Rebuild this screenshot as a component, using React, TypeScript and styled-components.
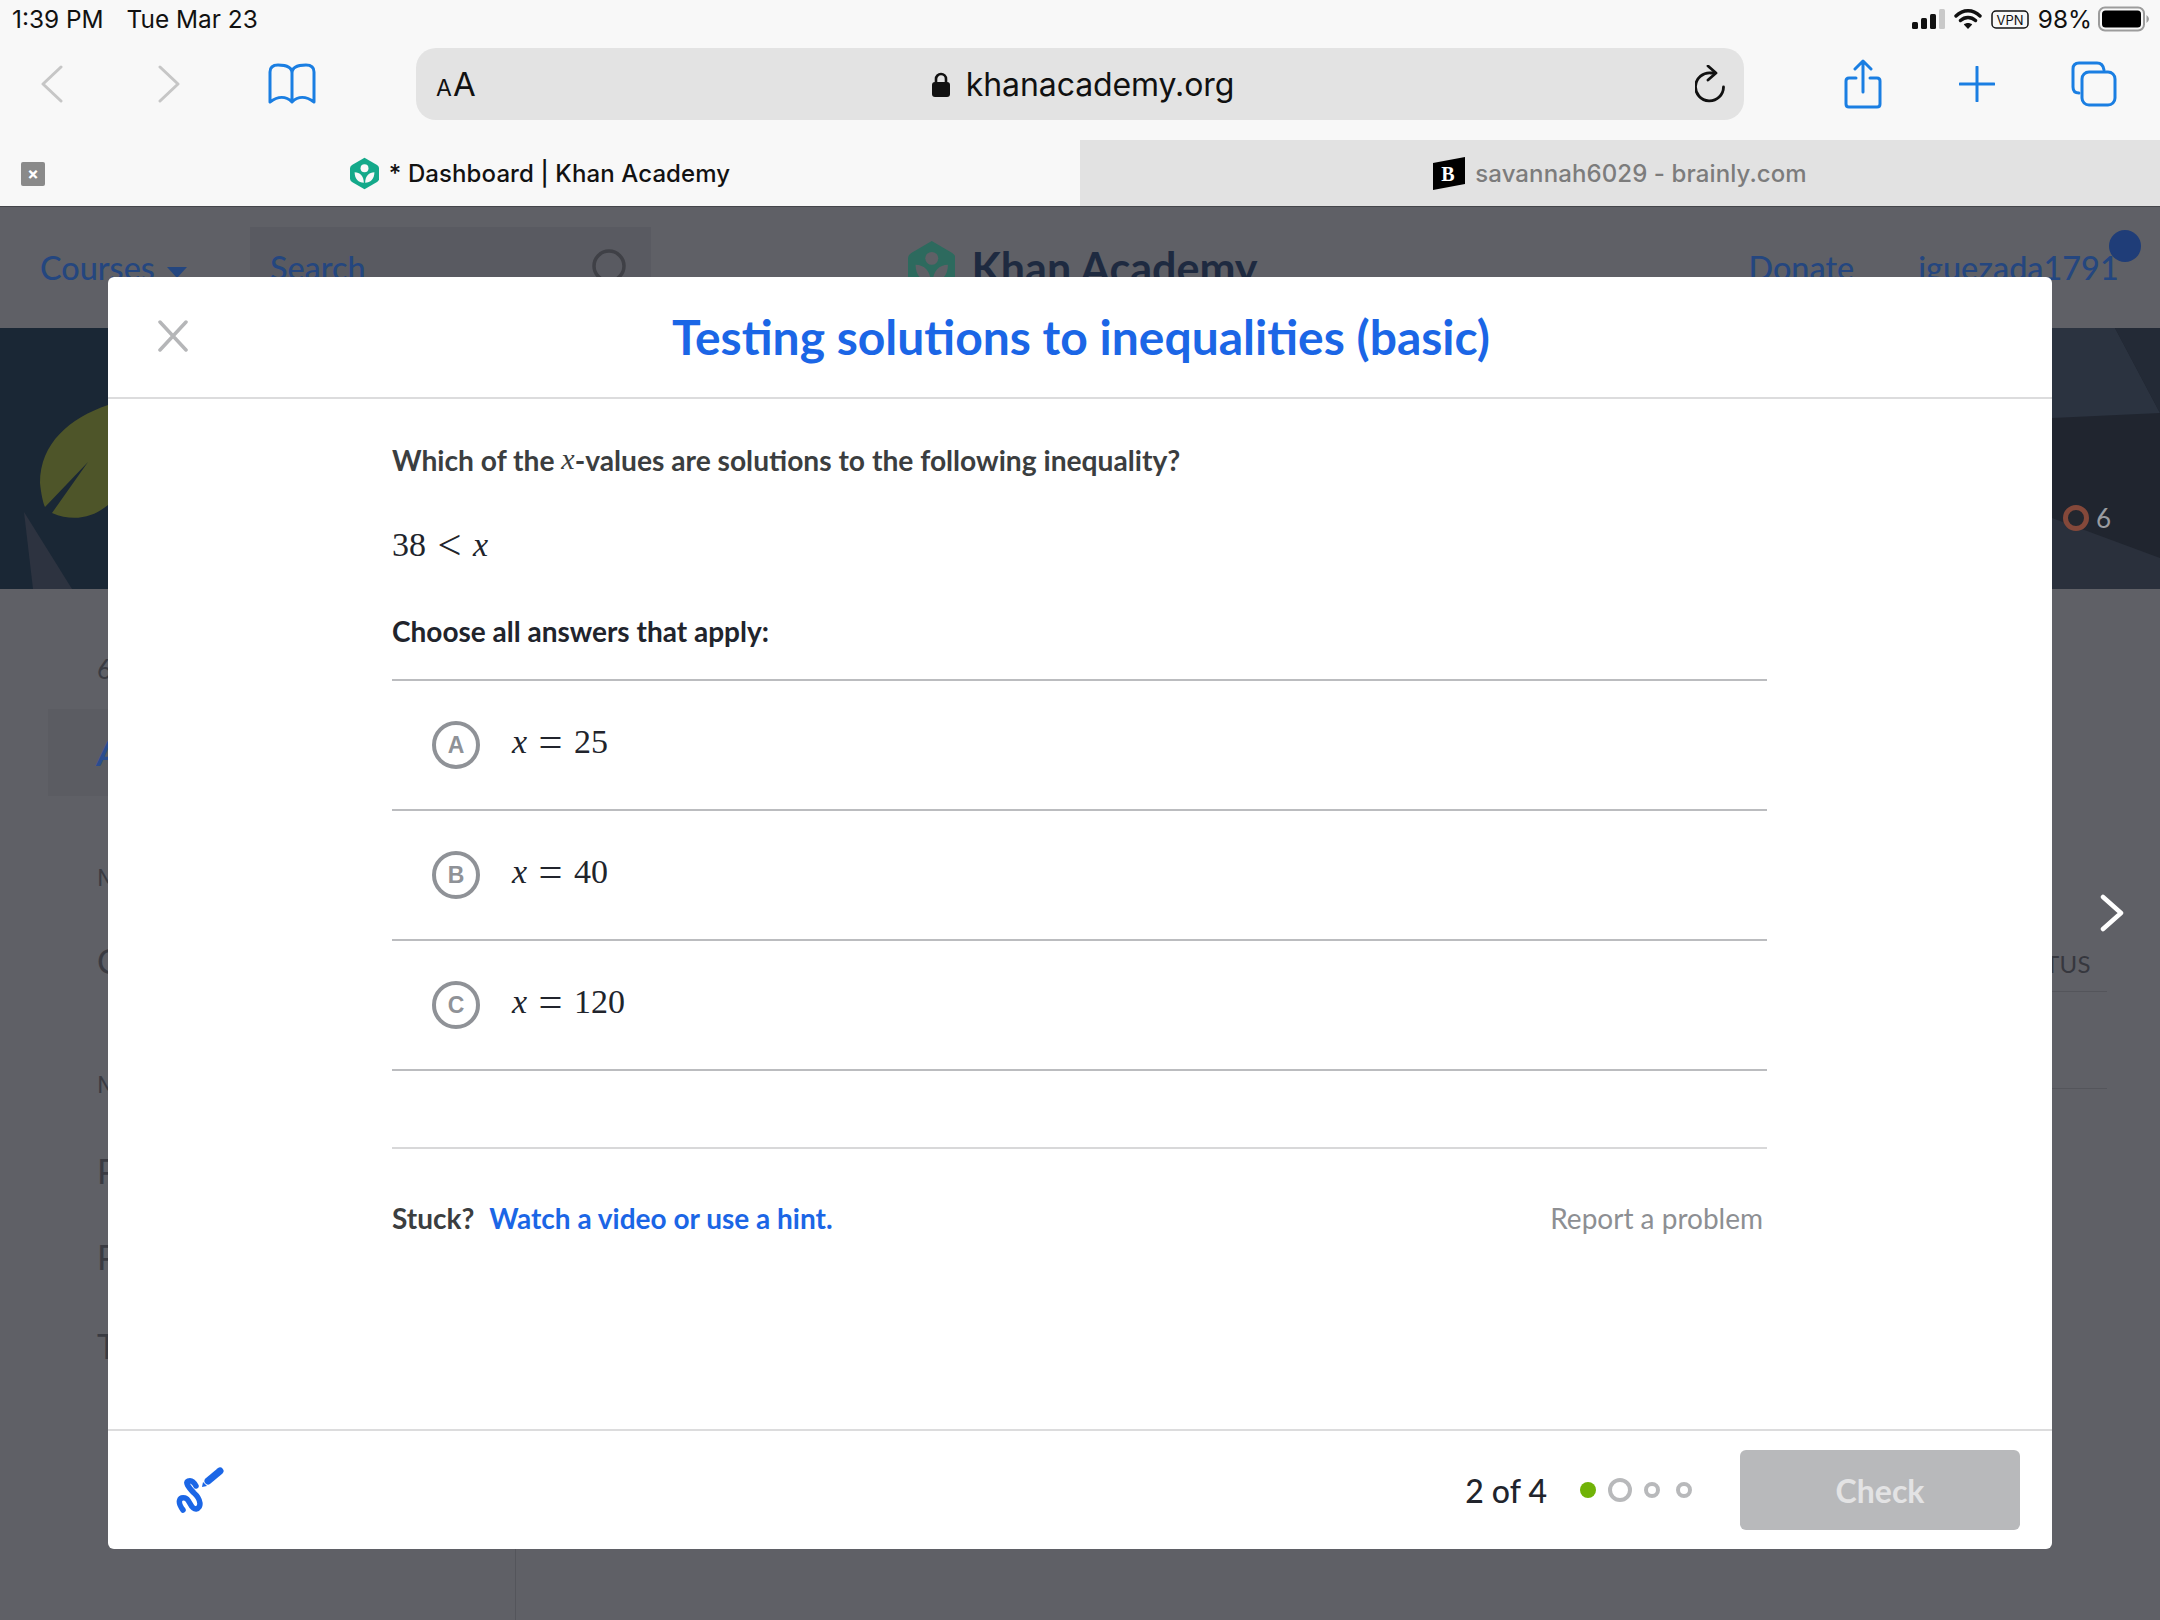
import styled, { createGlobalStyle } from "styled-components";

const GlobalStyle = createGlobalStyle`
  html, body {
    margin: 0;
    padding: 0;
    overflow: hidden;
    background: #5f6066;
  }
  * { box-sizing: border-box; }
`;

const Screen = styled.div`
  position: relative;
  display: flex;
  flex-direction: column;
  width: 2160px;
  height: 1620px;
  overflow: hidden;
  background: #5f6066;
  font-family: Lato, "Liberation Sans", sans-serif;
`;

/* browser chrome */
const Chrome = styled.div`
  flex: none;
  background: #f8f8f8;
  font-family: Inter, "Liberation Sans", sans-serif;
`;

const StatusBar = styled.div`
  display: flex;
  align-items: center;
  justify-content: space-between;
  height: 40px;
  padding: 0 10px 2px 12px;
  font-size: 24.4px;
  color: #111;
`;

const StatusGroup = styled.div<{ $gap: number }>`
  display: flex;
  align-items: center;
  gap: ${p => p.$gap}px;
`;

const BatteryLevel = styled.span`
  margin-right: -3px;
`;

const Toolbar = styled.div`
  display: flex;
  align-items: center;
  height: 100px;
  padding-bottom: 12px;
`;

const NavIcon = styled.svg<{ $left: number }>`
  flex: none;
  margin-left: ${p => p.$left}px;
  display: block;
`;

const UrlBar = styled.div`
  flex: none;
  display: flex;
  align-items: center;
  width: 1328px;
  height: 72px;
  margin-left: 100px;
  padding: 0 17px 0 20px;
  border-radius: 20px;
  background: #e3e3e3;
  color: #111;
`;

const TextSize = styled.div`
  width: 41px;
  font-size: 33px;
  line-height: 1;
  white-space: nowrap;

  & small {
    font-size: 23px;
    margin-right: 1px;
  }
`;

const Address = styled.div`
  flex: 1;
  display: flex;
  align-items: center;
  justify-content: center;
  gap: 16px;
  padding-right: 6px;
  font-size: 32px;
  letter-spacing: -0.1px;
`;

const TabBar = styled.div`
  display: grid;
  grid-template-columns: 1fr 1fr;
  height: 67px;
  border-bottom: 1px solid #44454a;
`;

const Tab = styled.div<{ $active?: boolean }>`
  position: relative;
  display: flex;
  align-items: center;
  justify-content: center;
  gap: 10px;
  background: ${p => (p.$active ? "#f8f8f8" : "#e2e2e2")};
  color: ${p => (p.$active ? "#121212" : "#7c7c7c")};
  font-size: 24px;
  font-weight: 500;
  letter-spacing: 0.1px;
`;

const TabClose = styled.div`
  position: absolute;
  left: 21px;
  top: 22px;
  width: 24px;
  height: 24px;
  display: flex;
  align-items: center;
  justify-content: center;
  border-radius: 2px;
  background: #8a8a8a;
  color: #fff;
  font-size: 17px;
  font-weight: 700;
`;

/* dimmed page behind the dialog */
const PageNav = styled.div`
  flex: none;
  position: relative;
  display: flex;
  align-items: center;
  height: 120px;
  padding: 0 0 0 40px;
  font-size: 32.4px;
  font-weight: 500;
  color: #24467f;
`;

const CaretDown = styled.span`
  width: 0;
  height: 0;
  margin: 10px 0 0 12px;
  border-left: 10px solid transparent;
  border-right: 10px solid transparent;
  border-top: 11px solid #24467f;
`;

const SearchBox = styled.div`
  display: flex;
  align-items: center;
  justify-content: space-between;
  align-self: flex-start;
  width: 401px;
  height: 120px;
  margin: 20px 0 0 63px;
  padding: 0 22px 40px 20px;
  background: #595a61;
  color: #24467f;
`;

const NavLogo = styled.div`
  display: flex;
  align-items: center;
  gap: 16px;
  margin-left: 257px;
  font-size: 43px;
  font-weight: 700;
  color: #1e2a40;
`;

const NavLink = styled.span<{ $left: number }>`
  position: relative;
  margin-left: ${p => p.$left}px;
  white-space: nowrap;
`;

const NavDot = styled.span`
  position: absolute;
  top: -18px;
  right: -22px;
  width: 32px;
  height: 32px;
  border-radius: 50%;
  background: #1f3d78;
`;

const Hero = styled.div`
  flex: none;
  position: relative;
  display: flex;
  align-items: center;
  justify-content: flex-end;
  gap: 7px;
  height: 261px;
  margin-top: 1px;
  padding: 118px 49px 0 0;
  color: #9a9ca1;
  font-size: 26px;
  background: #222935;
`;

const HeroArt = styled.svg`
  position: absolute;
  left: 0;
  top: 0;
`;

const HeroBadge = styled.span`
  position: relative;
  width: 26px;
  height: 26px;
  border-radius: 50%;
  border: 5px solid #84483a;
  background: #23272f;
`;

const HeroCount = styled.span`
  position: relative;
`;

const PageBody = styled.div`
  flex: 1;
  display: grid;
  grid-template-columns: 516px 1fr;
`;

const Sidebar = styled.div`
  position: relative;
  padding: 62px 0 0 48px;
  border-right: 1px solid #54555b;
  color: #3a3b42;
`;

const SideItem = styled.div<{ $top: number; $size: number }>`
  margin-top: ${p => p.$top}px;
  padding-left: 49px;
  font-size: ${p => p.$size}px;
  line-height: 36px;
  white-space: nowrap;
`;

const SideActive = styled.div`
  display: flex;
  align-items: center;
  width: 400px;
  height: 87px;
  margin-top: 22px;
  padding-left: 49px;
  font-size: 34px;
  font-style: italic;
  font-weight: 700;
  color: #2a4d8f;
  background: #5b5c62;
`;

const PageMain = styled.div`
  display: flex;
  flex-direction: column;
  align-items: flex-end;
  padding: 358px 53px 0 0;
  color: #36373e;
`;

const StatusHead = styled.div`
  width: 500px;
  height: 45px;
  padding-right: 16px;
  text-align: right;
  font-size: 24px;
  line-height: 34px;
  letter-spacing: 0.4px;
  border-bottom: 1px solid #54555b;
`;

const StatusRow = styled.div`
  width: 500px;
  height: 97px;
  border-bottom: 1px solid #54555b;
`;

const NextArrow = styled.svg`
  position: absolute;
  left: 2100px;
  top: 894px;
`;

/* exercise dialog */
const Dialog = styled.div`
  position: absolute;
  left: 108px;
  top: 277px;
  display: flex;
  flex-direction: column;
  width: 1944px;
  height: 1272px;
  border-radius: 6px;
  background: #fff;
`;

const DialogHead = styled.div`
  flex: none;
  position: relative;
  display: flex;
  align-items: center;
  justify-content: center;
  height: 122px;
  border-bottom: 2px solid #dcdcdd;
`;

const CloseIcon = styled.svg`
  position: absolute;
  left: 50px;
  top: 43px;
`;

const DialogTitle = styled.h1`
  margin: 0 0 2px 2px;
  font-size: 48px;
  font-weight: 700;
  color: #1b66e6;
`;

const DialogBody = styled.div`
  flex: 1;
  display: flex;
  flex-direction: column;
  padding: 0 285px 0 284px;
`;

const Question = styled.p`
  display: flex;
  align-items: center;
  height: 36px;
  margin: 43px 0 0;
  font-size: 28.2px;
  font-weight: 700;
  color: #3b3e40;
  white-space: pre;
`;

const MathText = styled.span<{ $size?: number }>`
  margin-bottom: 6px;
  font-family: "Liberation Serif", "DejaVu Serif", serif;
  font-size: ${p => p.$size ?? 34}px;
  font-weight: 400;
  color: #21242c;
  white-space: pre;
`;

const QuestionVar = styled(MathText)`
  margin-bottom: 2px;
  color: #3b3e40;
`;

const MathOp = styled.span`
  margin: 0 0.27em;
  font-size: 1.25em;
  line-height: 1;
  vertical-align: -3px;
`;

const Equation = styled.div`
  height: 40px;
  margin-top: 46px;
  line-height: 40px;
`;

const Prompt = styled.div`
  height: 36px;
  margin-top: 49px;
  font-size: 28px;
  line-height: 36px;
  font-weight: 700;
  color: #21242c;
`;

const Choices = styled.div`
  margin-top: 30px;
  border-top: 2px solid #bbbcbf;
`;

const Choice = styled.div`
  display: flex;
  align-items: center;
  gap: 32px;
  height: 130px;
  padding-left: 40px;
  border-bottom: 2px solid #bbbcbf;
`;

const ChoiceLetter = styled.div`
  flex: none;
  display: flex;
  align-items: center;
  justify-content: center;
  width: 48px;
  height: 48px;
  border: 4px solid #8f9297;
  border-radius: 50%;
  font-family: "Liberation Sans", sans-serif;
  font-size: 23px;
  font-weight: 700;
  color: #8f9297;
`;

const Spacer = styled.div`
  height: 78px;
  border-bottom: 2px solid #d8d8d9;
`;

const HintRow = styled.div`
  display: flex;
  align-items: center;
  justify-content: space-between;
  height: 36px;
  margin-top: 51px;
  padding-right: 4px;
  font-size: 28px;
`;

const Stuck = styled.span`
  font-weight: 700;
  color: #3b3e40;
  white-space: pre;
`;

const HintLink = styled.a`
  margin-left: 15px;
  color: #1b66e6;
  font-weight: 700;
`;

const Report = styled.a`
  color: #8d8f93;
`;

const DialogFoot = styled.div`
  flex: none;
  display: flex;
  align-items: center;
  height: 120px;
  padding: 0 32px 0 68px;
  border-top: 2px solid #dcdcdd;
`;

const Progress = styled.div`
  margin-left: auto;
  font-size: 32px;
  font-weight: 500;
  color: #21242c;
`;

const Dots = styled.div`
  display: grid;
  grid-template-columns: repeat(4, 32px);
  justify-items: center;
  align-items: center;
  margin: 0 40px 0 25px;
`;

const Dot = styled.span<{ $kind: "done" | "current" | "todo" }>`
  width: ${p => (p.$kind === "current" ? 24 : 16)}px;
  height: ${p => (p.$kind === "current" ? 24 : 16)}px;
  border-radius: 50%;
  background: ${p => (p.$kind === "done" ? "#71b307" : "#fff")};
  border: ${p => (p.$kind === "done" ? "none" : "4px solid #b8b9bb")};
`;

const CheckButton = styled.button`
  width: 280px;
  height: 80px;
  border: none;
  border-radius: 6px;
  background: #b8b9bb;
  color: #e3e3e4;
  font-family: Lato, "Liberation Sans", sans-serif;
  font-size: 32px;
  font-weight: 700;
`;

function KhanLogo({ size, bg, fg }: { size: number; bg: string; fg: string }) {
  return (
    <svg width={size * 0.88} height={size} viewBox="0 0 44 50">
      <path d="M22 1 L41 12 Q44 14 44 17 L44 33 Q44 36 41 38 L22 49 L3 38 Q0 36 0 33 L0 17 Q0 14 3 12 Z" fill={bg} />
      <circle cx="22" cy="17" r="6" fill={fg} />
      <path d="M7 23 C15 23 21 29 21 39 C13 39 7 33 7 23 Z M37 23 C29 23 23 29 23 39 C31 39 37 33 37 23 Z" fill={fg} />
    </svg>
  );
}

const choices = [
  { letter: "A", value: "25" },
  { letter: "B", value: "40" },
  { letter: "C", value: "120" }
];

export default function App() {
  return (
    <Screen>
      <GlobalStyle />
      <Chrome>
        <StatusBar>
          <StatusGroup $gap={23}>
            <span>1:39 PM</span>
            <span>Tue Mar 23</span>
          </StatusGroup>
          <StatusGroup $gap={9}>
            <svg width="33" height="20" viewBox="0 0 33 20">
              <rect x="0" y="13" width="6" height="7" rx="1.5" fill="#111" />
              <rect x="9" y="9" width="6" height="11" rx="1.5" fill="#111" />
              <rect x="18" y="5" width="6" height="15" rx="1.5" fill="#111" />
              <rect x="27" y="0" width="6" height="20" rx="1.5" fill="#c9c9c9" />
            </svg>
            <svg width="28" height="22" viewBox="0 0 28 22">
              <path d="M2 8 C9 1 19 1 26 8 M6.5 12.5 C11 8.5 17 8.5 21.5 12.5" fill="none" stroke="#111" strokeWidth="3.4" strokeLinecap="round" />
              <path d="M14 21 L9.8 16.6 C12 14.6 16 14.6 18.2 16.6 Z" fill="#111" />
            </svg>
            <svg width="38" height="19" viewBox="0 0 38 19">
              <rect x="1" y="1" width="36" height="17" rx="4" fill="none" stroke="#111" strokeWidth="1.5" />
              <text x="19" y="14.5" textAnchor="middle" fontSize="13" fontFamily="Inter, sans-serif" fill="#111">VPN</text>
            </svg>
            <BatteryLevel>98%</BatteryLevel>
            <svg width="52" height="26" viewBox="0 0 52 26">
              <rect x="1" y="1.5" width="45" height="23" rx="6" fill="none" stroke="#9c9c9c" strokeWidth="2" />
              <rect x="4" y="4.5" width="39" height="17" rx="3.5" fill="#000" />
              <path d="M48.5 9 Q51 11 51 13 Q51 15 48.5 17 Z" fill="#9c9c9c" />
            </svg>
          </StatusGroup>
        </StatusBar>
        <Toolbar>
          <NavIcon $left={40} width="24" height="38" viewBox="0 0 24 38">
            <path d="M21 2 L3 19 L21 36" fill="none" stroke="#c6c6c6" strokeWidth="3" strokeLinecap="round" strokeLinejoin="round" />
          </NavIcon>
          <NavIcon $left={93} width="24" height="38" viewBox="0 0 24 38">
            <path d="M3 2 L21 19 L3 36" fill="none" stroke="#c6c6c6" strokeWidth="3" strokeLinecap="round" strokeLinejoin="round" />
          </NavIcon>
          <NavIcon $left={87} width="48" height="42" viewBox="0 0 48 42">
            <path d="M2 39 L2 9 C2 4 5 2 10 2 C17 2 24 3 24 10 C24 3 31 2 38 2 C43 2 46 4 46 9 L46 39 C38 33 30 33 24 39 C18 33 10 33 2 39 Z M24 10 L24 39" fill="none" stroke="#1a7ee2" strokeWidth="3" strokeLinejoin="round" />
          </NavIcon>
          <UrlBar>
            <TextSize><small>A</small>A</TextSize>
            <Address>
              <svg width="18" height="25" viewBox="0 0 18 25">
                <path d="M4 11 V7 a5 5 0 0 1 10 0 V11" fill="none" stroke="#111" strokeWidth="2.6" />
                <rect x="0" y="10" width="18" height="15" rx="3" fill="#111" />
              </svg>
              <span>khanacademy.org</span>
            </Address>
            <svg width="32" height="38" viewBox="0 0 32 38">
              <path d="M20 8 L16 8 A14 14 0 1 0 28.5 22" fill="none" stroke="#111" strokeWidth="2.8" strokeLinecap="round" />
              <path d="M13 1 L21 8 L13 15" fill="none" stroke="#111" strokeWidth="2.8" strokeLinecap="round" strokeLinejoin="round" />
            </svg>
          </UrlBar>
          <NavIcon $left={100} width="38" height="50" viewBox="0 0 38 50">
            <path d="M12 19 L5 19 Q2 19 2 22 L2 45 Q2 48 5 48 L33 48 Q36 48 36 45 L36 22 Q36 19 33 19 L26 19 M19 33 L19 3 M11 10 L19 2 L27 10" fill="none" stroke="#1a7ee2" strokeWidth="3" strokeLinecap="round" strokeLinejoin="round" />
          </NavIcon>
          <NavIcon $left={77} width="36" height="36" viewBox="0 0 36 36">
            <path d="M18 1 V35 M1 18 H35" fill="none" stroke="#1a7ee2" strokeWidth="3" strokeLinecap="round" />
          </NavIcon>
          <NavIcon $left={76} width="46" height="46" viewBox="0 0 46 46">
            <path d="M8 32 Q2 32 2 26 L2 8 Q2 2 8 2 L26 2 Q32 2 33 9" fill="none" stroke="#1a7ee2" strokeWidth="3" strokeLinecap="round" />
            <rect x="11" y="11" width="33" height="33" rx="7" fill="none" stroke="#1a7ee2" strokeWidth="3" />
          </NavIcon>
        </Toolbar>
        <TabBar>
          <Tab $active>
            <TabClose>×</TabClose>
            <KhanLogo size={33} bg="#14a98a" fg="#f8f8f8" />
            <span>* Dashboard | Khan Academy</span>
          </Tab>
          <Tab>
            <svg width="32" height="33" viewBox="0 0 32 33">
              <path d="M0 6 L32 0 V27 L0 33 Z" fill="#000" />
              <text x="15" y="24" textAnchor="middle" fontSize="20" fontWeight="700" fontFamily="Liberation Serif, serif" fill="#fff">B</text>
            </svg>
            <span>savannah6029 - brainly.com</span>
          </Tab>
        </TabBar>
      </Chrome>

      <PageNav>
        <span>Courses</span>
        <CaretDown />
        <SearchBox>
          <span>Search</span>
          <svg width="38" height="38" viewBox="0 0 38 38">
            <circle cx="18" cy="18" r="15" fill="none" stroke="#3f4046" strokeWidth="3.5" />
          </svg>
        </SearchBox>
        <NavLogo>
          <KhanLogo size={54} bg="#2d6a5e" fg="#5f6066" />
          <span>Khan Academy</span>
        </NavLogo>
        <NavLink $left={491}>Donate</NavLink>
        <NavLink $left={64}>
          iguezada1791
          <NavDot />
        </NavLink>
      </PageNav>

      <Hero>
        <HeroArt width="2160" height="261" viewBox="0 0 2160 261">
          <rect width="2160" height="261" fill="#1a2735" />
          <path d="M1000 0 H2160 V261 H1000 Z" fill="#20252f" />
          <path d="M2052 0 H2115 L2160 85 L2052 90 Z" fill="#2b3340" />
          <path d="M2115 0 H2160 V85 Z" fill="#232a36" />
          <path d="M2052 190 L2160 230 V261 H2052 Z" fill="#2a303c" />
          <path d="M24 184 L72 261 H33 Z" fill="#2d3340" />
          <path d="M108 77 C70 90 40 115 40 155 C41 165 43 175 45 179 L88 134 L52 185 C75 195 95 188 108 177 Z" fill="#4e5529" />
        </HeroArt>
        <HeroBadge />
        <HeroCount>6</HeroCount>
      </Hero>

      <PageBody>
        <Sidebar>
          <SideItem $top={0} $size={26}>6th grade</SideItem>
          <SideActive>Assignments</SideActive>
          <SideItem $top={63} $size={24}>MY COURSES</SideItem>
          <SideItem $top={48} $size={34}>Course</SideItem>
          <SideItem $top={87} $size={24}>MY ACCOUNT</SideItem>
          <SideItem $top={51} $size={34}>Progress</SideItem>
          <SideItem $top={50} $size={34}>Profile</SideItem>
          <SideItem $top={53} $size={34}>Teachers</SideItem>
        </Sidebar>
        <PageMain>
          <StatusHead>STATUS</StatusHead>
          <StatusRow />
        </PageMain>
      </PageBody>

      <NextArrow width="24" height="38" viewBox="0 0 24 38">
        <path d="M3 3 L21 19 L3 35" fill="none" stroke="#fff" strokeWidth="4.5" strokeLinecap="round" strokeLinejoin="round" />
      </NextArrow>

      <Dialog>
        <DialogHead>
          <CloseIcon width="30" height="32" viewBox="0 0 30 32">
            <path d="M2 2 L28 30 M28 2 L2 30" fill="none" stroke="#b5b6b8" strokeWidth="3.5" strokeLinecap="round" />
          </CloseIcon>
          <DialogTitle>Testing solutions to inequalities (basic)</DialogTitle>
        </DialogHead>
        <DialogBody>
          <Question>
            Which of the <QuestionVar $size={30}><i>x</i></QuestionVar>-values are solutions to the following inequality?
          </Question>
          <Equation>
            <MathText>38<MathOp>&lt;</MathOp><i>x</i></MathText>
          </Equation>
          <Prompt>Choose all answers that apply:</Prompt>
          <Choices>
            {choices.map(choice => (
              <Choice key={choice.letter}>
                <ChoiceLetter>{choice.letter}</ChoiceLetter>
                <MathText><i>x</i><MathOp>=</MathOp>{choice.value}</MathText>
              </Choice>
            ))}
          </Choices>
          <Spacer />
          <HintRow>
            <div>
              <Stuck>Stuck?</Stuck>
              <HintLink>Watch a video or use a hint.</HintLink>
            </div>
            <Report>Report a problem</Report>
          </HintRow>
        </DialogBody>
        <DialogFoot>
          <svg width="48" height="49" viewBox="0 0 48 49">
            <path d="M7 44 C1 36 3 31 9 32 C14 33 14 43 20 43 C26 42 25 33 18 27 C12 21 9 16 12 15 C15 14 18 16 20 20" fill="none" stroke="#1b66e6" strokeWidth="5.5" strokeLinecap="round" strokeLinejoin="round" />
            <path d="M44 5 L32 15" fill="none" stroke="#1b66e6" strokeWidth="7" strokeLinecap="round" />
            <path d="M27 16 L31 20 L26 21 Z" fill="#1b66e6" />
          </svg>
          <Progress>2 of 4</Progress>
          <Dots>
            <Dot $kind="done" />
            <Dot $kind="current" />
            <Dot $kind="todo" />
            <Dot $kind="todo" />
          </Dots>
          <CheckButton disabled>Check</CheckButton>
        </DialogFoot>
      </Dialog>
    </Screen>
  );
}
